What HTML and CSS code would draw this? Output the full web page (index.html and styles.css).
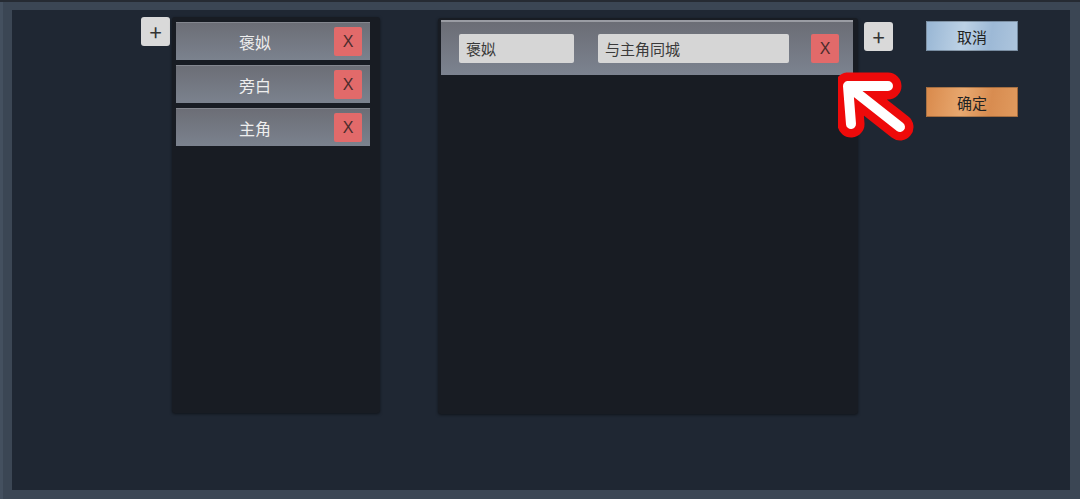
FILE: index.html
```html
<!DOCTYPE html>
<html lang="zh">
<head>
    <meta charset="UTF-8">
    <meta name="viewport" content="width=device-width, initial-scale=1.0">
    <title>角色关系</title>
    <link rel="stylesheet" href="styles.css">
</head>
<body>
    <div class="frame">
        <div class="stage">
            <button class="add-btn">+</button>

            <div class="panel role-panel">
                <div class="role-item"><span class="role-name">褒姒</span><button class="del-btn">X</button></div>
                <div class="role-item"><span class="role-name">旁白</span><button class="del-btn">X</button></div>
                <div class="role-item"><span class="role-name">主角</span><button class="del-btn">X</button></div>
            </div>

            <div class="panel relation-panel">
                <div class="relation-item">
                    <div class="field field-name">褒姒</div>
                    <div class="field field-desc">与主角同城</div>
                    <button class="del-btn">X</button>
                </div>
            </div>

            <button class="add-btn add-relation">+</button>

            <div class="actions">
                <button class="act-btn cancel">取消</button>
                <button class="act-btn confirm">确定</button>
            </div>

            <!-- 提示箭头 -->
            <svg class="hint-arrow" width="90" height="80" viewBox="0 0 90 80">
                <path d="M50 14 L10 14 L13 52 M10 14 L62 55" fill="none" stroke="#ee0a0a" stroke-width="27" stroke-linecap="round" stroke-linejoin="round"/>
                <path d="M50 14 L10 14 L13 52 M10 14 L62 55" fill="none" stroke="#ffffff" stroke-width="10" stroke-linecap="round" stroke-linejoin="round"/>
            </svg>
        </div>
    </div>
</body>
</html>
```

FILE: styles.css
```css
* {
    box-sizing: border-box;
}
body {
    margin: 0;
    background-color: #262b33;
    font-family: "Noto Sans CJK SC", "Noto Sans", sans-serif;
}
.frame {
    width: 1080px;
    height: 499px;
    margin-top: 2px;
    padding: 8px 10px 9px 12px;
    background-color: #3b4654;
    border-left: 3px solid #44505f;
}
.stage {
    position: relative;
    display: flex;
    align-items: flex-start;
    height: 480px;
    margin-left: -3px;
    padding: 7px 0 0 129px;
    background-color: #1f2733;
}
button {
    font-family: inherit;
    border: none;
    padding: 0;
    cursor: pointer;
}
.add-btn {
    width: 29px;
    height: 29px;
    border-radius: 3px;
    background-color: #d9d9d9;
    color: #333;
    font-size: 22px;
    line-height: 27px;
}
.panel {
    background-color: #181c23;
    border-radius: 3px;
    box-shadow: 0 1px 3px rgba(0, 0, 0, 0.5);
    height: 396px;
}
.role-panel {
    width: 208px;
    margin-left: 2px;
    padding: 5px 10px 0 4px;
}
.role-item {
    display: flex;
    align-items: center;
    height: 38px;
    margin-bottom: 5px;
    padding-right: 8px;
    background: linear-gradient(#6c6e76, #7b828e);
    border-top: 1px solid #84878f;
}
.role-name {
    flex: 1;
    text-align: center;
    color: #eeeeee;
    font-size: 16px;
}
.del-btn {
    width: 28px;
    height: 29px;
    border-radius: 2px;
    background-color: #e26a6a;
    color: #4b2c2c;
    font-size: 16px;
    font-family: "Liberation Sans", sans-serif;
}
.relation-panel {
    width: 420px;
    margin-left: 58px;
    margin-top: 1px;
    padding: 2px 5px 0 3px;
}
.relation-item {
    display: flex;
    align-items: center;
    height: 55px;
    padding: 0 13px 0 18px;
    background: linear-gradient(#6b6d75, #7c8390);
    border-top: 2px solid #9a9ca3;
}
.field {
    height: 29px;
    line-height: 29px;
    padding-left: 7px;
    background-color: #d6d6d6;
    border-radius: 2px;
    color: #3a3a3a;
    font-size: 15px;
}
.field-name {
    width: 115px;
}
.field-desc {
    width: 191px;
    margin-left: 24px;
    margin-right: 22px;
}
.add-relation {
    margin-left: 6px;
    margin-top: 5px;
}
.actions {
    display: flex;
    flex-direction: column;
    gap: 36px;
    margin-left: 33px;
    margin-top: 4px;
}
.act-btn {
    width: 92px;
    height: 30px;
    color: #222;
    font-size: 15px;
    border: 1px solid rgba(0, 0, 0, 0.25);
}
.cancel {
    background: linear-gradient(100deg, #98b6d4, #bcd1e5 40%, #9db9d6 70%, #adc5dd);
}
.confirm {
    background: linear-gradient(100deg, #d98a4c, #e8a86f 40%, #d88c50 70%, #e09a5e);
}
.hint-arrow {
    position: absolute;
    left: 826px;
    top: 62px;
}
```
